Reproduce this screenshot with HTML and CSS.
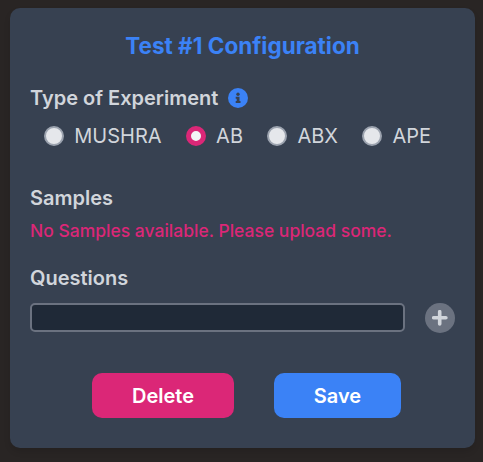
FILE: index.html
```html
<!DOCTYPE html>
<html lang="en">
<head>
<meta charset="utf-8">
<title>Test Configuration</title>
<link rel="stylesheet" href="styles.css">
</head>
<body>
<main class="card">
  <h1 class="title">Test #1 Configuration</h1>
  <div class="heading-row">
    <h2 class="heading">Type of Experiment</h2>
    <svg class="info" viewBox="0 0 20 20"><circle cx="10" cy="10" r="10" fill="#3b82f6"/><circle cx="10" cy="6.200" r="1.700" fill="#374151"/><path fill="#374151" d="M7.700 8.700h3.800v4.300h1v2H7.700v-2h1v-2.300h-1z"/></svg>
  </div>
  <div class="options">
    <label class="option"><span class="radio"></span>MUSHRA</label>
    <label class="option"><span class="radio radio-on"></span>AB</label>
    <label class="option"><span class="radio"></span>ABX</label>
    <label class="option"><span class="radio"></span>APE</label>
  </div>
  <h2 class="heading samples">Samples</h2>
  <p class="warning">No Samples available. Please upload some.</p>
  <h2 class="heading questions">Questions</h2>
  <div class="question-row">
    <input class="field" type="text" aria-label="Question">
    <button class="add" aria-label="Add question"><svg viewBox="0 0 16 16"><path fill="none" stroke="currentColor" stroke-width="3.600" stroke-linecap="round" d="M7.700 1.700v12.200M1.700 7.800h12.200"/></svg></button>
  </div>
  <div class="actions">
    <button class="button delete">Delete</button>
    <button class="button save">Save</button>
  </div>
</main>
</body>
</html>
```

FILE: styles.css
```css
* { box-sizing: border-box; }
body { margin: 0; padding: 8px 8px 14px 10px; height: 462px; background: #292524; font-family: Inter, sans-serif; color: #d1d5db; }
.card { height: 440px; padding: 20px; border-radius: 10px; background: #374151; box-shadow: 0 4px 6px rgba(0, 0, 0, .1); }
.title, .heading, .warning { margin: 0; }
.title { padding-top: 4px; font-size: 22.5px; line-height: 28px; font-weight: 700; text-align: center; color: #3b82f6; }
.heading-row { display: flex; align-items: center; gap: 10px; margin-top: 24px; }
.heading { font-size: 20px; line-height: 28px; font-weight: 600; }
.info { width: 20px; height: 20px; }
.options { display: flex; gap: 24.2px; margin: 10px 0 0 14px; }
.option { display: flex; align-items: center; gap: 10.3px; font-size: 20px; line-height: 28px; }
.radio { width: 20px; height: 20px; border: 2px solid #9ca3af; border-radius: 50%; background: #e5e7eb; }
.radio-on { border: 5px solid #db2777; background: #f3f4f6; }
.samples { margin-top: 34px; }
.warning { margin-top: 6px; font-size: 17.5px; line-height: 26px; font-weight: 500; color: #db2777; }
.questions { margin-top: 20px; }
.question-row { display: flex; align-items: flex-start; gap: 20px; margin-top: 11px; }
.field { width: 375px; height: 29px; border: 2px solid #6b7280; border-radius: 5px; background: #1f2937; }
.add { display: grid; place-items: center; width: 30px; height: 30px; padding: 0; border: 0; border-radius: 50%; background: #6b7280; color: #d1d5db; }
.add svg { width: 16px; height: 16px; }
.actions { display: flex; justify-content: center; gap: 40px; margin-top: 40px; padding-left: 8px; }
.button { height: 45px; padding: 0; border: 0; border-radius: 10px; font: 600 20px/28px Inter, sans-serif; color: #fff; }
.delete { width: 142px; background: #db2777; }
.save { width: 127px; background: #3b82f6; }
```
